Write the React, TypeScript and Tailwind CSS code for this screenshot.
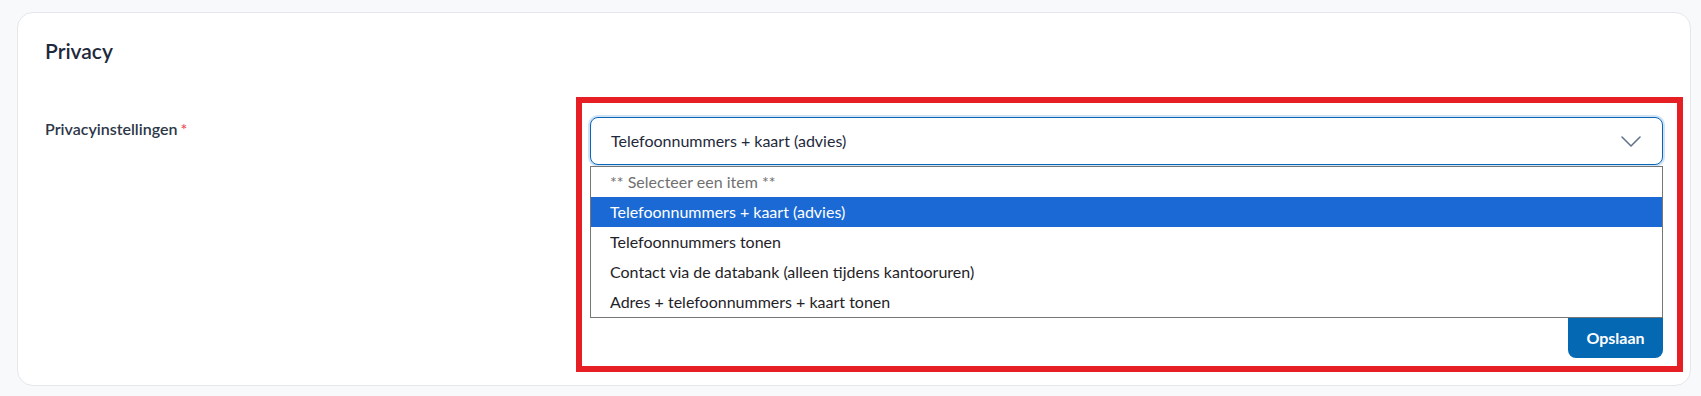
import { useState } from "react";

const options = [
  "Telefoonnummers + kaart (advies)",
  "Telefoonnummers tonen",
  "Contact via de databank (alleen tijdens kantooruren)",
  "Adres + telefoonnummers + kaart tonen",
];

function Chevron() {
  return (
    <svg width="20" height="11" viewBox="0 0 20 11" fill="none" className="text-[#64748b]">
      <path d="M1 1l9 9 9-9" stroke="currentColor" strokeWidth="1.6" strokeLinecap="round" strokeLinejoin="round" />
    </svg>
  );
}

export default function App() {
  const [value] = useState<string>(options[0]);

  return (
    <div className="min-h-screen bg-[#f8f9fb] pt-3 font-['Lato',sans-serif]">
      <div className="relative ml-[17px] w-[1674px] rounded-2xl border border-[#e5e7eb] bg-white px-[27px] pt-[24px] pb-[27px]">
        <h2 className="text-[21px] leading-7 font-semibold text-[#1e293b]">Privacy</h2>

        <div className="mt-[52px] grid grid-cols-[545px_1fr]">
          <label className="text-[16px] leading-6 font-semibold text-[#2d3748]">
            Privacyinstellingen<span className="ml-[3px] text-[#f0505a]">*</span>
          </label>

          <div className="flex flex-col">
            <div className="relative">
              <div className="flex h-12 items-center justify-between rounded-lg border border-[#0b66b8] bg-white pl-5 pr-[21px] shadow-[0_0_0_2px_#cfe3f5] text-[16px] text-[#1e293b]">
                <span>{value}</span>
                <Chevron />
              </div>

              <ul className="absolute top-[49px] left-0 right-0 z-10 border border-[#767676] bg-white text-[16px]">
                <li className="flex h-[30px] items-center pl-[19px] text-[#707070]">** Selecteer een item **</li>
                {options.map((opt) => (
                  <li
                    key={opt}
                    className={
                      opt === value
                        ? "flex h-[30px] items-center bg-[#1a69d4] pl-[19px] text-white"
                        : "flex h-[30px] items-center pl-[19px] text-[#1f2328]"
                    }
                  >
                    {opt}
                  </li>
                ))}
              </ul>
            </div>

            <div className="mt-[153px] flex justify-end">
              <button className="h-10 w-[95px] rounded-b-lg bg-[#0468b2] text-[16px] font-bold text-white">
                Opslaan
              </button>
            </div>
          </div>
        </div>

        {/* annotation frame */}
        <div className="pointer-events-none absolute top-[84px] left-[558px] h-[275px] w-[1107px] border-[6px] border-[#e51f24]" />
      </div>
    </div>
  );
}
